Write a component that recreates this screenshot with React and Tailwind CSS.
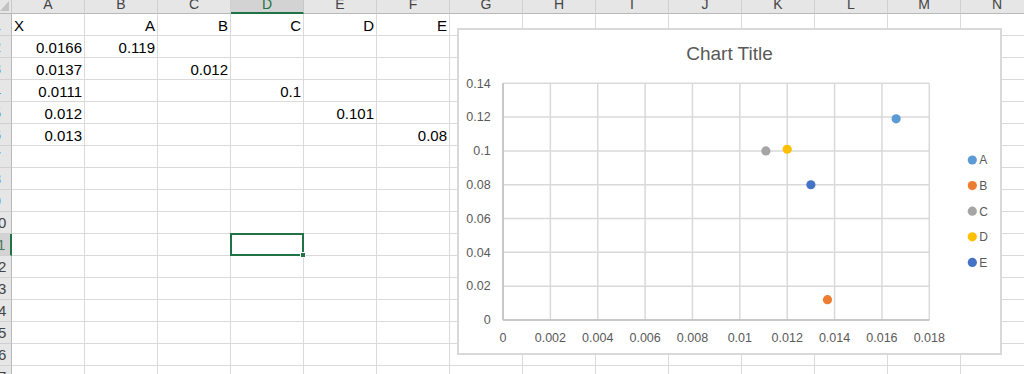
import React from "react";

const COLS = ["A", "B", "C", "D", "E", "F", "G", "H", "I", "J", "K", "L", "M", "N"];
const ROWS = Array.from({ length: 17 }, (_, i) => i + 1);

const DATA = {
  1: { A: ["X", "l"], B: ["A", "r"], C: ["B", "r"], D: ["C", "r"], E: ["D", "r"], F: ["E", "r"] },
  2: { A: ["0.0166", "r"], B: ["0.119", "r"] },
  3: { A: ["0.0137", "r"], C: ["0.012", "r"] },
  4: { A: ["0.0111", "r"], D: ["0.1", "r"] },
  5: { A: ["0.012", "r"], E: ["0.101", "r"] },
  6: { A: ["0.013", "r"], F: ["0.08", "r"] },
};

const SERIES = [
  { name: "A", x: 0.0166, y: 0.119, color: "#5B9BD5" },
  { name: "B", x: 0.0137, y: 0.012, color: "#ED7D31" },
  { name: "C", x: 0.0111, y: 0.1, color: "#A5A5A5" },
  { name: "D", x: 0.012, y: 0.101, color: "#FFC000" },
  { name: "E", x: 0.013, y: 0.08, color: "#4472C4" },
];

function Chart() {
  const X0 = 44;
  const X1 = 470.3;
  const Y0 = 290;
  const Y1 = 53.3;
  const sx = (v) => X0 + (v / 0.018) * (X1 - X0);
  const sy = (v) => Y0 - (v / 0.14) * (Y0 - Y1);
  const xt = [0, 0.002, 0.004, 0.006, 0.008, 0.01, 0.012, 0.014, 0.016, 0.018];
  const xl = ["0", "0.002", "0.004", "0.006", "0.008", "0.01", "0.012", "0.014", "0.016", "0.018"];
  const yt = [0, 0.02, 0.04, 0.06, 0.08, 0.1, 0.12, 0.14];
  const yl = ["0", "0.02", "0.04", "0.06", "0.08", "0.1", "0.12", "0.14"];
  return (
    <svg width="541" height="323" viewBox="0 0 541 323" style={{ fontFamily: '"Liberation Sans", Arial, sans-serif' }}>
      <text x="270.5" y="30" textAnchor="middle" fontSize="19" fill="#595959">
        Chart Title
      </text>
      {xt.map((v, i) => (
        <line key={"v" + i} x1={sx(v)} x2={sx(v)} y1={Y1} y2={Y0} stroke="#d9d9d9" strokeWidth="1.5" />
      ))}
      {yt.map((v, i) => (
        <line key={"h" + i} x1={X0} x2={X1} y1={sy(v)} y2={sy(v)} stroke="#d9d9d9" strokeWidth="1.5" />
      ))}
      <line x1={X0} x2={X0} y1={Y1} y2={Y0} stroke="#bfbfbf" strokeWidth="1.5" />
      <line x1={X0} x2={X1} y1={Y0} y2={Y0} stroke="#bfbfbf" strokeWidth="1.5" />
      {yt.map((v, i) => (
        <text key={"yl" + i} x="31.7" y={sy(v) + 4.3} textAnchor="end" fontSize="12.5" fill="#595959">
          {yl[i]}
        </text>
      ))}
      {xt.map((v, i) => (
        <text key={"xl" + i} x={sx(v)} y="311.7" textAnchor="middle" fontSize="12.5" fill="#595959">
          {xl[i]}
        </text>
      ))}
      {SERIES.map((s) => (
        <circle key={"p" + s.name} cx={sx(s.x)} cy={sy(s.y)} r="4.6" fill={s.color} />
      ))}
      {SERIES.map((s, k) => (
        <g key={"lg" + s.name}>
          <circle cx="513.3" cy={130 + k * 25.6} r="4.6" fill={s.color} />
          <text x="520.3" y={130 + k * 25.6 + 4.3} fontSize="12" fill="#595959">
            {s.name}
          </text>
        </g>
      ))}
    </svg>
  );
}

export default function App() {
  return (
    <div
      className="relative w-[1024px] h-[374px] overflow-hidden bg-white"
      style={{ fontFamily: '"Liberation Sans", Arial, sans-serif' }}
    >
      <div className="grid grid-cols-[12px_repeat(14,73px)] grid-rows-[14px_repeat(17,22px)] w-[1034px]">
        {/* corner */}
        <div className="bg-[#e6e6e6] border-r border-b border-r-[#c8c8c8] border-b-[#b8b8b8] overflow-hidden">
          <svg width="11" height="13" viewBox="0 0 11 13">
            <polygon points="9,1 9,11 0,11" fill="#c2c2c2" />
          </svg>
        </div>
        {COLS.map((c) =>
          c === "D" ? (
            <div
              key={"h" + c}
              className="bg-[#d3d3d3] border-r border-r-[#c8c8c8] border-b-2 border-b-[#217346] flex justify-center items-end overflow-hidden text-[14px] leading-[14px] pb-[1px] text-[#217346]"
            >
              {c}
            </div>
          ) : (
            <div
              key={"h" + c}
              className="bg-[#e6e6e6] border-r border-b border-r-[#d0d0d0] border-b-[#b8b8b8] flex justify-center items-end overflow-hidden text-[14px] leading-[14px] pb-[2px] text-[#444444]"
            >
              {c}
            </div>
          )
        )}
        {ROWS.map((r) => (
          <React.Fragment key={"r" + r}>
            {r === 11 ? (
              <div className="bg-[#d3d3d3] border-r-2 border-r-[#217346] border-b border-b-[#d0d0d0] flex justify-end overflow-hidden">
                <div className="w-[25px] shrink-0 text-center text-[15px] leading-[21px] text-[#4a7a5f]">{r}</div>
              </div>
            ) : (
              <div className="bg-[#e6e6e6] border-r border-b border-r-[#b8b8b8] border-b-[#d0d0d0] flex justify-end overflow-hidden">
                <div
                  className={
                    r < 10
                      ? "w-[28px] shrink-0 text-center text-[15px] leading-[21px] text-[#4f86c6]"
                      : "w-[26px] shrink-0 text-center text-[15px] leading-[21px] text-[#444444]"
                  }
                >
                  {r}
                </div>
              </div>
            )}
            {COLS.map((c) => {
              const v = DATA[r] && DATA[r][c];
              const sel = r === 11 && c === "D";
              return (
                <div
                  key={c + r}
                  className={
                    sel
                      ? "relative z-10 border-r border-b border-[#dadada]"
                      : v && v[1] === "l"
                      ? "relative border-r border-b border-[#dadada] flex items-end justify-start px-[2px] text-[15px] leading-[18px] text-black whitespace-nowrap"
                      : "relative border-r border-b border-[#dadada] flex items-end justify-end px-[2px] text-[15px] leading-[18px] text-black whitespace-nowrap"
                  }
                >
                  {v ? v[0] : ""}
                  {sel && (
                    <>
                      <div className="absolute -left-[1px] -top-[1px] -right-[1px] -bottom-[1px] border-2 border-[#217346]" />
                      <div className="absolute -right-[3px] -bottom-[3px] w-[6px] h-[6px] bg-[#217346] border border-white" />
                    </>
                  )}
                </div>
              );
            })}
          </React.Fragment>
        ))}
      </div>
      {/* chart overlay */}
      <div className="absolute left-[457px] top-[28px] w-[545px] h-[327px] bg-white border-2 border-[#d9d9d9]">
        <Chart />
      </div>
    </div>
  );
}
